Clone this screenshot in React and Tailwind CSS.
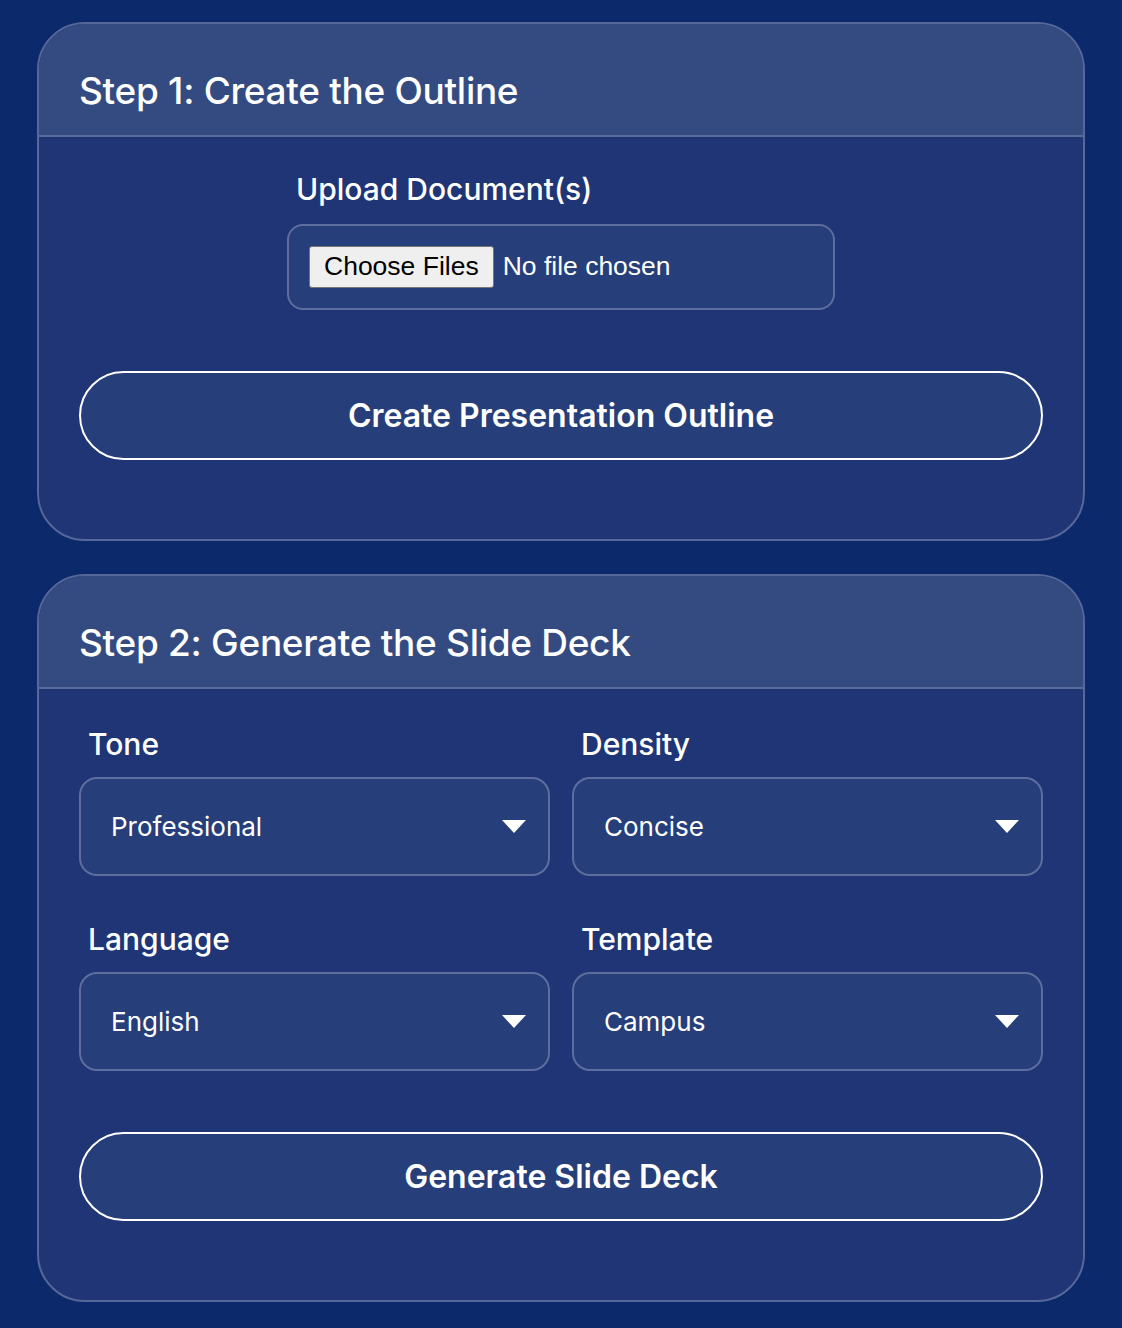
import React from "react";

const font = { fontFamily: "Inter, 'Noto Sans', sans-serif" };
const sysFont = { fontFamily: "'Liberation Sans', Arial, sans-serif" };

function Arrow() {
  return (
    <svg width="24" height="13" viewBox="0 0 24 13" className="shrink-0">
      <path d="M0 0 L24 0 L12 13 Z" fill="white" />
    </svg>
  );
}

function Select({ label, value }) {
  return (
    <div className="flex flex-col">
      <div className="text-[30px] font-medium text-white pl-[9px] h-[42px] leading-[42px] mb-[12px]">{label}</div>
      <div className="h-[99px] rounded-[18px] border-2 border-[#5d6d9d] bg-[#263e79] flex items-center justify-between pl-[30px] pr-[22px]">
        <span className="text-[26px] text-white">{value}</span>
        <Arrow />
      </div>
    </div>
  );
}

function Header({ children }) {
  return (
    <div className="h-[113px] bg-[#344b82] border-b-2 border-[#5a6b9c] flex items-center px-[40px] pt-[22px]">
      <h2 className="text-[37px] font-medium text-white tracking-[-0.3px] leading-none">{children}</h2>
    </div>
  );
}

export default function App() {
  return (
    <div className="min-h-[1328px] w-full bg-[#0c2a6b] px-[37px] pt-[22px] pb-[26px] flex flex-col gap-[33px]" style={font}>
      {/* Card 1 */}
      <div className="rounded-[48px] border-2 border-[#56679a] bg-[#1f3575] overflow-hidden">
        <Header>Step 1: Create the Outline</Header>
        <div className="px-[40px] pt-[31px] pb-[79px] flex flex-col">
          <div className="w-[548px] mx-auto flex flex-col">
            <div className="text-[30px] font-medium text-white pl-[9px] h-[42px] leading-[42px] mb-[14px]">Upload Document(s)</div>
            <div className="h-[86px] rounded-[16px] border-2 border-[#5d6d9d] bg-[#263e79] flex items-center pl-[20px]">
              <span
                className="h-[42px] px-[14px] flex items-center bg-[#efefef] border border-[#767676] rounded-[3px] text-[26.5px] text-black"
                style={sysFont}
              >
                Choose Files
              </span>
              <span className="ml-[9px] text-[26.5px] text-white" style={sysFont}>
                No file chosen
              </span>
            </div>
          </div>
          <button className="mt-[61px] h-[89px] rounded-full border-2 border-white bg-[#263e79] text-white text-[32px] font-semibold">
            Create Presentation Outline
          </button>
        </div>
      </div>

      {/* Card 2 */}
      <div className="rounded-[48px] border-2 border-[#56679a] bg-[#1f3575] overflow-hidden">
        <Header>Step 2: Generate the Slide Deck</Header>
        <div className="px-[40px] pt-[34px] pb-[79px] flex flex-col">
          <div className="grid grid-cols-2 gap-x-[22px] gap-y-[42px]">
            <Select label="Tone" value="Professional" />
            <Select label="Density" value="Concise" />
            <Select label="Language" value="English" />
            <Select label="Template" value="Campus" />
          </div>
          <button className="mt-[61px] h-[89px] rounded-full border-2 border-white bg-[#263e79] text-white text-[32px] font-semibold">
            Generate Slide Deck
          </button>
        </div>
      </div>
    </div>
  );
}
